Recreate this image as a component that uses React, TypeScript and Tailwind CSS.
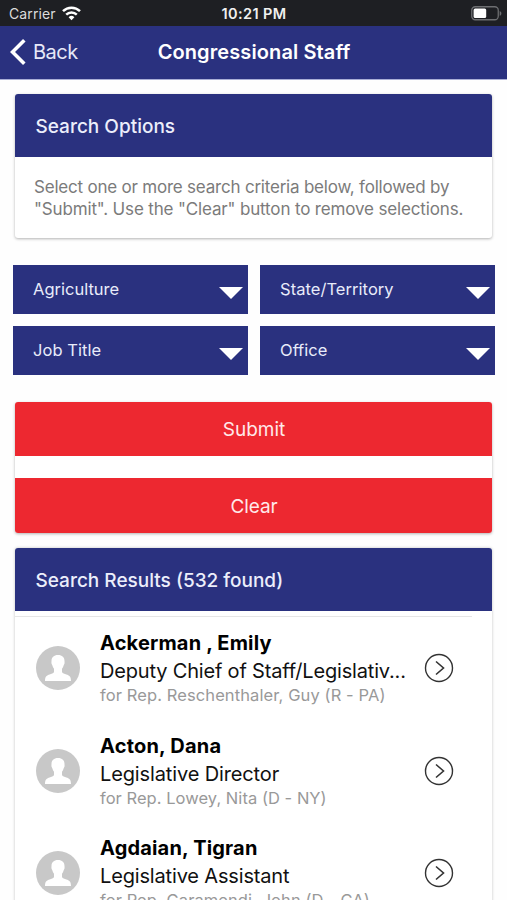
import React from "react";

type Person = { name: string; title: string; member: string; nameClass: string; titleClass: string; memberClass: string };

const people: Person[] = [
  {
    name: "Ackerman , Emily",
    title: "Deputy Chief of Staff/Legislativ...",
    member: "for Rep. Reschenthaler, Guy (R - PA)",
    nameClass: "tracking-[0.17px]",
    titleClass: "tracking-[-0.18px]",
    memberClass: "tracking-[0.1px]",
  },
  {
    name: "Acton, Dana",
    title: "Legislative Director",
    member: "for Rep. Lowey, Nita (D - NY)",
    nameClass: "tracking-[0.2px]",
    titleClass: "tracking-[-0.13px]",
    memberClass: "tracking-[0.04px]",
  },
  {
    name: "Agdaian, Tigran",
    title: "Legislative Assistant",
    member: "for Rep. Garamendi, John (D - CA)",
    nameClass: "tracking-[0.17px]",
    titleClass: "tracking-[-0.16px]",
    memberClass: "tracking-[0.07px]",
  },
];

function WifiIcon() {
  return (
    <svg width="19" height="15" viewBox="0 0 19 15" fill="none" stroke="#fff" strokeWidth="2.5">
      <path d="M1 5.2a12.2 12.2 0 0 1 17 0" />
      <path d="M4.2 8.7a7.6 7.6 0 0 1 10.6 0" />
      <path d="M9.5 14.2 6.6 11.2a4.1 4.1 0 0 1 5.8 0Z" fill="#fff" stroke="none" />
    </svg>
  );
}

function BatteryIcon() {
  return (
    <svg width="31" height="15" viewBox="0 0 31 15" fill="none">
      <rect x="0.75" y="0.75" width="26.5" height="13" rx="3.5" stroke="#6d6e71" strokeWidth="1.3" />
      <rect x="2.6" y="2.6" width="12.6" height="9.3" rx="1.5" fill="#fff" />
      <path d="M28.7 5v4.8c1-.4 1.7-1.3 1.7-2.4S29.7 5.4 28.7 5Z" fill="#6d6e71" />
    </svg>
  );
}

function Avatar() {
  return (
    <svg className="shrink-0" width="44" height="44" viewBox="0 0 44 44">
      <circle cx="22" cy="22" r="22" fill="#c8c8c8" />
      <path
        d="M22 9c-4.200 0-6.500 2.400-6.500 6 0 1-.2 1.600 0 2.600.2.900.7 1.200.9 2 .3 1.300.8 2.300 1.600 3.200v3.200c-.6 1.400-2.600 1.800-4.400 2.500-2.600 1-4.600 1.600-4.600 6.600h26c0-5-2-5.600-4.600-6.600-1.800-.7-3.800-1.100-4.400-2.500v-3.200c.8-.9 1.300-1.900 1.600-3.200.2-.8.700-1.100.9-2 .2-1 0-1.600 0-2.600 0-3.600-2.300-6-6.500-6Z"
        fill="#fff"
      />
    </svg>
  );
}

function Dropdown({ label, className }: { label: string; className: string }) {
  return (
    <button className="flex h-[49px] items-center justify-between bg-[#2a317f] pr-[5px] pl-5 text-left text-[#e8ebfa]">
      <span className={`pb-[1px] text-[16.5px] leading-5 ${className}`}>{label}</span>
      <svg className="mt-[6px]" width="24" height="12" viewBox="0 0 24 12">
        <path d="M0 0h24L12 12Z" fill="#fff" />
      </svg>
    </button>
  );
}

export default function App() {
  return (
    <div className="flex h-[900px] w-[507px] flex-col overflow-hidden bg-[#fefefe] font-['Inter',sans-serif]">
      <div className="grid h-[26px] shrink-0 grid-cols-3 items-center bg-[#1e1f23] pr-[5px] pl-[9px] text-white">
        <div className="flex items-center gap-[6px] pt-[1px]">
          <span className="text-[14px] leading-5 tracking-[0.12px] text-[#dcdcdc]">Carrier</span>
          <WifiIcon />
        </div>
        <span className="pt-[2px] pr-[3px] text-center text-[14.5px] leading-5 font-semibold tracking-[0.4px] whitespace-nowrap text-[#f0f0f0]">
          10:21 PM
        </span>
        <div className="flex justify-end">
          <BatteryIcon />
        </div>
      </div>

      <header className="grid h-[54px] shrink-0 grid-cols-[110px_1fr_110px] items-center border-b border-[#a9aed6] bg-[#2a317f] pr-[9px] pl-[10px] pb-[1px]">
        <button className="flex items-center gap-[7px] text-[20px] leading-6 tracking-[-0.5px] text-[#e6e8f8]">
          <svg width="16" height="26" viewBox="0 0 16 26" fill="none" stroke="#fff" strokeWidth="3.6">
            <path d="M14.300 1.300 2.500 13 14.300 24.700" />
          </svg>
          Back
        </button>
        <h1 className="text-center text-[20px] leading-6 font-semibold tracking-[0.1px] whitespace-nowrap text-white">Congressional Staff</h1>
      </header>

      <section className="mt-[14px] ml-[15px] h-[144px] w-[477px] shrink-0 overflow-hidden rounded-[3px] bg-white shadow-[0_1px_3px_rgba(0,0,0,0.3)]">
        <h2 className="flex h-[63px] items-center bg-[#2a317f] pt-[3px] pl-[20.5px] text-[19px] font-medium text-[#eceefb]">Search Options</h2>
        <p className="pt-[19px] pl-[19px] text-[17px] leading-[22px] whitespace-nowrap text-[#7b7b7b]">
          <span className="tracking-[-0.21px]">Select one or more search criteria below, followed by</span>
          <br />
          <span className="tracking-[-0.15px]">"Submit". Use the "Clear" button to remove selections.</span>
        </p>
      </section>

      <div className="mt-[27px] ml-[13px] grid w-[482px] shrink-0 grid-cols-2 gap-3">
        <Dropdown label="Agriculture" className="tracking-[0px]" />
        <Dropdown label="State/Territory" className="tracking-[0.05px]" />
        <Dropdown label="Job Title" className="tracking-[0.05px]" />
        <Dropdown label="Office" className="tracking-[0.02px]" />
      </div>

      <section className="mt-[27px] ml-[15px] flex h-[131px] w-[477px] shrink-0 flex-col justify-between overflow-hidden rounded-[3px] bg-white text-[19px] text-[#ffe9e9] shadow-[0_1px_3px_rgba(0,0,0,0.3)]">
        <button className="h-[54px] bg-[#ed2830] pt-[3px] pl-[1px]">Submit</button>
        <button className="h-[55px] bg-[#ed2830] pt-[3px] pl-[1px] tracking-[-0.1px]">Clear</button>
      </section>

      <section className="mt-[15px] ml-[15px] h-[400px] w-[477px] shrink-0 rounded-[3px] bg-white shadow-[0_0_3px_rgba(0,0,0,0.25)]">
        <h2 className="flex h-[63px] items-center rounded-t-[3px] bg-[#2a317f] pt-[3px] pl-[20.5px] text-[19px] font-medium text-[#eceefb]">
          Search Results (532 found)
        </h2>
        <div className="mt-[5px] mr-5 border-t border-[#e6e6e6]">
          {people.map((p) => (
            <div key={p.name} className="flex h-[102.5px] items-center pr-[18px] pl-[21px]">
              <Avatar />
              <div className="ml-5 w-[325px] pb-[1px] whitespace-nowrap">
                <div className={`text-[20px] leading-7 font-bold text-black ${p.nameClass}`}>{p.name}</div>
                <div className={`text-[20px] leading-7 text-[#111] ${p.titleClass}`}>{p.title}</div>
                <div className={`text-[16.500px] leading-[21px] text-[#999] ${p.memberClass}`}>{p.member}</div>
              </div>
              <svg className="shrink-0" width="30" height="30" viewBox="0 0 30 30" fill="none" stroke="#333" strokeWidth="1.4">
                <circle cx="15" cy="15" r="13.500" />
                <path d="M12 8.500 19.500 15 12 21.500" strokeWidth="1.600" />
              </svg>
            </div>
          ))}
        </div>
      </section>
    </div>
  );
}
